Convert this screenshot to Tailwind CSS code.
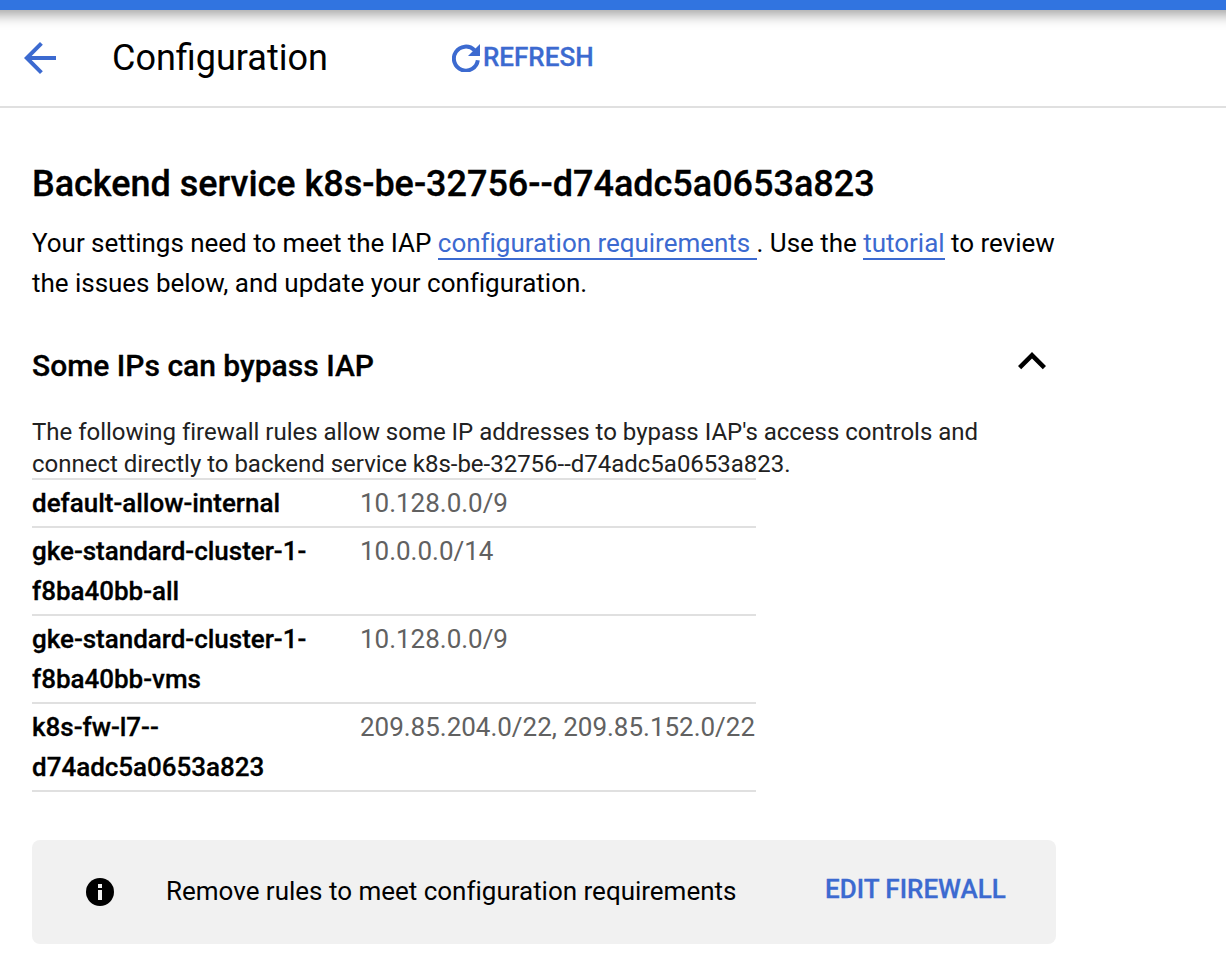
<!doctype html>
<html lang="en">
<head>
  <meta charset="UTF-8">
  <meta name="viewport" content="width=device-width, initial-scale=1.0">
  <title>Configuration</title>
  <script src="https://cdn.jsdelivr.net/npm/@tailwindcss/browser@4"></script>
</head>
<body class="bg-white text-black font-['Roboto',sans-serif] h-[974px] overflow-hidden">
  <div class="relative -mx-6 h-[10px] bg-[#3174e0] shadow-[0_1px_16px_rgba(0,0,0,0.65)]"></div>
  <header class="flex items-center h-[98px] border-b-2 border-[#e0e0e0] pl-6">
    <svg class="w-8 h-8" viewBox="4 4 16 16" fill="#3c6ad0"><path d="M20 11H7.83l5.59-5.59L12 4l-8 8 8 8 1.41-1.41L7.83 13H20v-2z"/></svg>
    <h1 class="ml-14 w-[340px] text-[36px] leading-[48px]"><span class="whitespace-nowrap">Configuration</span></h1>
    <button class="flex items-center gap-[3px] text-[26px] font-medium text-[#3c6ad0] [-webkit-text-stroke:0.3px]">
      <svg class="w-7 h-7" viewBox="0 0 28 28" fill="none"><path d="M22.5 6.2A12 12 0 1 0 25.8 16.2" stroke="#3c6ad0" stroke-width="4"/><path d="M28 0v12H16z" fill="#3c6ad0"/></svg>
      <span class="-mt-0.5">REFRESH</span>
    </button>
  </header>

  <main class="w-[1056px] pl-8 pt-[52px]">
    <h2 class="text-[36px] leading-[48px] font-medium whitespace-nowrap -tracking-[0.02px] [-webkit-text-stroke:0.3px]">Backend service k8s-be-32756--d74adc5a0653a823</h2>
    <p class="mt-[15px] text-[26px] leading-[40px] whitespace-nowrap -tracking-[0.025px]">Your settings need to meet the IAP <a class="text-[#3c6ad0] border-b-2 border-[#3c6ad0]">configuration requirements&nbsp;</a>. Use the <a class="text-[#3c6ad0] border-b-2 border-[#3c6ad0]">tutorial</a> to review<br>the issues below, and update your configuration.</p>

    <div class="mt-[43px] flex justify-between">
      <h3 class="text-[30px] leading-[40px] font-medium [-webkit-text-stroke:0.3px]">Some IPs can bypass IAP</h3>
      <svg class="w-12 h-12 -mt-2.5" viewBox="0 0 24 24" fill="#000"><path d="M12 8l-7 7 1.6 1.6 5.4-5.4 5.4 5.4L19 15z"/></svg>
    </div>
    <p class="mt-[30px] text-[24px] leading-[32px] text-[#212121] whitespace-nowrap -tracking-[0.015px]">The following firewall rules allow some IP addresses to bypass IAP's access controls and<br>connect directly to backend service k8s-be-32756--d74adc5a0653a823.</p>

    <table class="w-[724px] table-fixed text-[26px] leading-[40px] -mt-0.5 -tracking-[0.02px]">
      <tbody class="align-top">
        <tr class="border-y-2 border-[#e0e0e0]">
          <td class="w-[328px] py-[3px] font-medium [-webkit-text-stroke:0.3px]">default-allow-internal</td>
          <td class="py-[3px] text-[#616161]">10.128.0.0/9</td>
        </tr>
        <tr class="border-b-2 border-[#e0e0e0]">
          <td class="py-[3px] font-medium [-webkit-text-stroke:0.3px]">gke-standard-cluster-1-<br>f8ba40bb-all</td>
          <td class="py-[3px] text-[#616161]">10.0.0.0/14</td>
        </tr>
        <tr class="border-b-2 border-[#e0e0e0]">
          <td class="py-[3px] font-medium [-webkit-text-stroke:0.3px]">gke-standard-cluster-1-<br>f8ba40bb-vms</td>
          <td class="py-[3px] text-[#616161]">10.128.0.0/9</td>
        </tr>
        <tr class="border-b-2 border-[#e0e0e0]">
          <td class="py-[3px] font-medium [-webkit-text-stroke:0.3px]">k8s-fw-l7--<br>d74adc5a0653a823</td>
          <td class="py-[3px] text-[#616161] whitespace-nowrap">209.85.204.0/22, 209.85.152.0/22</td>
        </tr>
      </tbody>
    </table>

    <div class="mt-12 flex items-center h-[104px] rounded-lg bg-[#f1f1f1] pl-[54px] text-[26px]">
      <svg class="w-7 h-7" viewBox="0 0 28 28"><circle cx="14" cy="14" r="14" fill="#000"/><path fill="#f1f1f1" d="M12 6h4v4h-4zM12 12h4v10h-4z"/></svg>
      <span class="-mt-0.5 ml-[52px] w-[659px] whitespace-nowrap -tracking-[0.01px]">Remove rules to meet configuration requirements</span>
      <button class="-mt-1.5 font-medium text-[#3c6ad0] whitespace-nowrap [-webkit-text-stroke:0.3px]">EDIT FIREWALL</button>
    </div>
  </main>
</body>
</html>
